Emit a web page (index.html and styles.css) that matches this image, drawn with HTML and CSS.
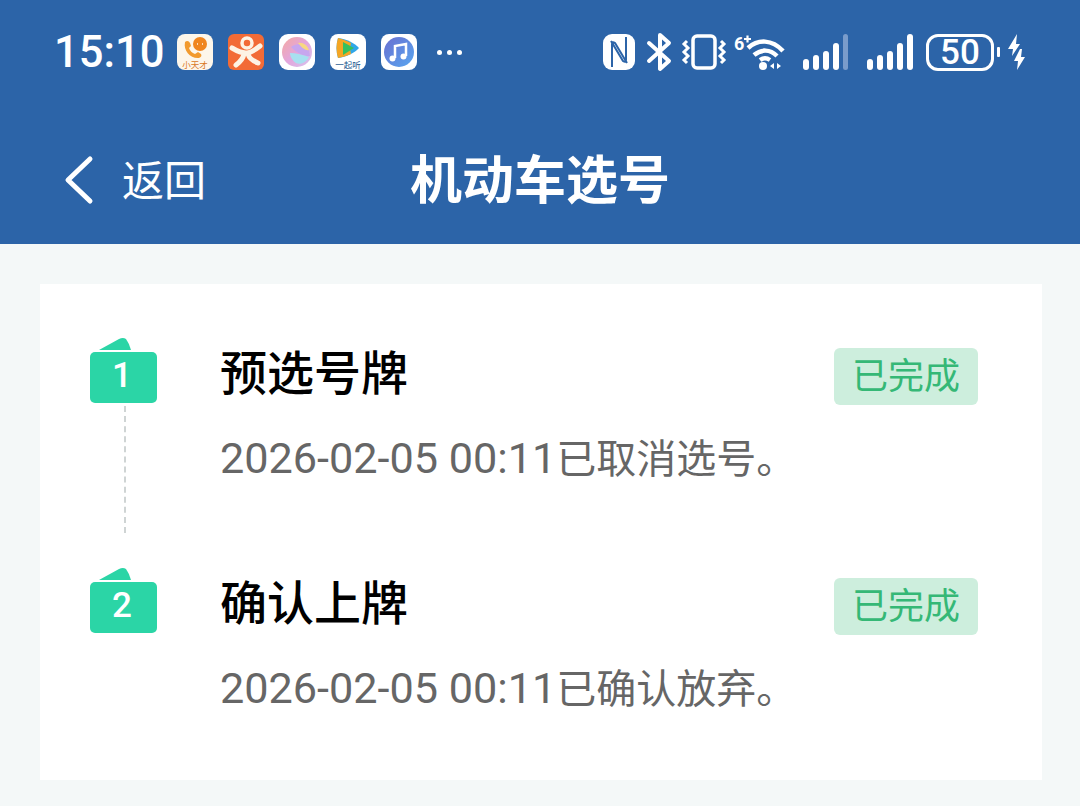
FILE: index.html
```html
<!DOCTYPE html>
<html lang="zh-CN">

<head>
    <meta charset="UTF-8">
    <title>机动车选号</title>
    <link rel="stylesheet" href="styles.css">
</head>

<body>
    <div class="header">
        <div class="status">
            <div class="status-left">
                <span class="time">15:10</span>
                <div class="apps">
                    <svg class="app" viewBox="0 0 36 36">
                        <rect width="36" height="36" rx="8" fill="#fdf6ea" />
                        <path d="M8 8c2-2 4-1 5 1l1 3-2 2c1 3 3 5 6 6l3-2 3 2c1 2 0 3-2 4-8 1-16-7-14-16z" fill="#f29a2e" />
                        <circle cx="23" cy="10" r="7" fill="#f0851e" />
                        <path d="M20 10h1M25 10h1" stroke="#fdf6ea" stroke-width="1.500" />
                        <text class="app-text" x="18" y="34" fill="#d9781f">小天才</text>
                    </svg>
                    <svg class="app" viewBox="0 0 36 36">
                        <rect width="36" height="36" rx="6" fill="#f26b36" />
                        <circle cx="19" cy="9" r="5" fill="none" stroke="#fdf3e4" stroke-width="3.500" />
                        <path d="M4 14c5 3 9 5 14 5s9-3 14-7M16 20c-1 5-4 8-8 11M20 20c1 4 5 7 10 9" fill="none" stroke="#fdf3e4" stroke-width="5" stroke-linecap="round" />
                    </svg>
                    <svg class="app" viewBox="0 0 36 36">
                        <defs>
                            <linearGradient id="orb" x1="0" y1="0" x2="1" y2="1">
                                <stop offset="0" stop-color="#f5a9a0" />
                                <stop offset="0.5" stop-color="#e3a6dc" />
                                <stop offset="1" stop-color="#d6c4ee" />
                            </linearGradient>
                        </defs>
                        <rect width="36" height="36" rx="9" fill="#fff" />
                        <circle cx="18" cy="18" r="15" fill="url(#orb)" />
                        <path d="M12 13c6-5 15-3 18 3l1 6c-6 1-13-3-19-9z" fill="#c7a6ee" />
                        <path d="M19 9c5-1 9 2 11 7-3 1-7-2-11-7z" fill="#f8d880" />
                        <path d="M11 19c6 0 13 2 19 4-3 6-9 8-13 6-3-2-6-6-6-10z" fill="#a8e0f0" />
                    </svg>
                    <svg class="app" viewBox="0 0 36 36">
                        <rect width="36" height="36" rx="8" fill="#fff" />
                        <path d="M8 4c8 1 17 5 21 10-4 5-13 9-21 10-2-7-2-13 0-20z" fill="#2fa6e8" />
                        <path d="M8 4c5 1 9 3 13 5-1 4-1 8 0 11-4 2-9 3-13 4-2-7-2-13 0-20z" fill="#f5a623" />
                        <path d="M13 8l11 6-11 7z" fill="#35c05f" />
                        <text class="app-text" x="18" y="34" fill="#20558c">一起听</text>
                    </svg>
                    <svg class="app" viewBox="0 0 36 36">
                        <defs>
                            <linearGradient id="note" x1="0" y1="0" x2="1" y2="1">
                                <stop offset="0" stop-color="#6a6fd0" />
                                <stop offset="1" stop-color="#58a6f0" />
                            </linearGradient>
                        </defs>
                        <rect width="36" height="36" rx="8" fill="#fff" />
                        <circle cx="18" cy="18" r="15" fill="url(#note)" />
                        <path d="M14 24V12l11-2v12" fill="none" stroke="#fff" stroke-width="2.500" />
                        <circle cx="11.500" cy="24.500" r="3" fill="#fff" />
                        <circle cx="22.500" cy="22.500" r="3" fill="#fff" />
                    </svg>
                </div>
                <div class="more"><i></i><i></i><i></i></div>
            </div>
            <div class="status-right">
                <svg class="nfc" viewBox="0 0 32 36">
                    <rect x="0" y="0" width="32" height="36" rx="9" fill="#fff" />
                    <path d="M9 33V10q0-3 3-1l12 20M23 3v23q0 3-3 1L8 7" fill="none" stroke="#2c64a8" stroke-width="2" />
                </svg>
                <svg class="bt" viewBox="0 0 24 36">
                    <path d="M2 9l20 18-9 8V1l9 8L2 27" fill="none" stroke="#fff" stroke-width="4" stroke-linejoin="round" stroke-linecap="round" />
                </svg>
                <svg class="vibrate" viewBox="0 0 44 36">
                    <rect x="11" y="2" width="22" height="32" rx="4" fill="none" stroke="#fff" stroke-width="3.500" />
                    <path d="M5 7l-3 3 4 4-4 4 4 4-4 4 3 3M39 7l3 3-4 4 4 4-4 4 4 4-3 3" fill="none" stroke="#fff" stroke-width="3" />
                </svg>
                <svg class="wifi" viewBox="0 0 52 36">
                    <text class="wifi-six" x="0" y="16" fill="#fff">6</text>
                    <path d="M10 5h7M13.500 1.500v7" stroke="#fff" stroke-width="2.200" />
                    <path d="M14 14c10-9 24-9 35 3M20 21c7-6 16-6 23 1M26 26c3-2 7-2 10 0" fill="none" stroke="#fff" stroke-width="4.500" />
                    <circle cx="29" cy="32" r="4" fill="#fff" />
                    <path d="M36 32l4-3v6zM43 29l4 3-4 3z" fill="#fff" />
                </svg>
                <svg class="signal" viewBox="0 0 46 36">
                    <rect x="0" y="25" width="6" height="11" rx="3" fill="#fff" />
                    <rect x="10" y="21" width="6" height="15" rx="3" fill="#fff" />
                    <rect x="20" y="17" width="6" height="19" rx="3" fill="#fff" />
                    <rect x="30" y="9" width="6" height="27" rx="3" fill="#fff" />
                    <rect x="40" y="0" width="5" height="36" rx="2.500" fill="#7a9ccb" />
                </svg>
                <svg class="signal signal-full" viewBox="0 0 46 36">
                    <rect x="0" y="25" width="6" height="11" rx="3" fill="#fff" />
                    <rect x="10" y="21" width="6" height="15" rx="3" fill="#fff" />
                    <rect x="20" y="17" width="6" height="19" rx="3" fill="#fff" />
                    <rect x="30" y="9" width="6" height="27" rx="3" fill="#fff" />
                    <rect x="40" y="0" width="6" height="36" rx="3" fill="#fff" />
                </svg>
                <div class="battery">50</div>
                <div class="battery-nub"></div>
                <svg class="bolt" viewBox="0 0 18 36">
                    <path d="M10 0L1 15h5l-1 7 8-12H9zM13 15L7 27h4l-1 9 8-13h-4l1-8z" fill="#fff" />
                </svg>
            </div>
        </div>
        <div class="nav">
            <div class="back">
                <svg class="chevron" viewBox="0 0 30 50">
                    <path d="M26 4L4 25l22 21" fill="none" stroke="#fff" stroke-width="5" stroke-linecap="round" stroke-linejoin="round" />
                </svg>
                <span class="back-text">返回</span>
            </div>
            <div class="nav-title">机动车选号</div>
            <div></div>
        </div>
    </div>

    <div class="card">
        <div class="step">
            <div class="step-side">
                <svg class="step-tab" viewBox="0 0 32 14">
                    <path d="M0 13L20 2q4-2 7 0 3 4 5 11z" fill="#2bd5a6" />
                </svg>
                <div class="step-num">1</div>
                <div class="step-line"></div>
            </div>
            <div class="step-body">
                <div class="step-head">
                    <span class="step-title">预选号牌</span>
                    <span class="tag">已完成</span>
                </div>
                <div class="step-desc"><span class="desc-time">2026-02-05 00:11</span>已取消选号。</div>
            </div>
        </div>
        <div class="step">
            <div class="step-side">
                <svg class="step-tab" viewBox="0 0 32 14">
                    <path d="M0 13L20 2q4-2 7 0 3 4 5 11z" fill="#2bd5a6" />
                </svg>
                <div class="step-num">2</div>
            </div>
            <div class="step-body">
                <div class="step-head">
                    <span class="step-title">确认上牌</span>
                    <span class="tag">已完成</span>
                </div>
                <div class="step-desc"><span class="desc-time">2026-02-05 00:11</span>已确认放弃。</div>
            </div>
        </div>
    </div>
</body>

</html>
```

FILE: styles.css
```css
body {
    margin: 0;
    height: 806px;
    overflow: hidden;
    background-color: #f4f8f8;
    font-family: Roboto, "Noto Sans CJK SC", sans-serif;
}

.header {
    height: 244px;
    background-color: #2c64a8;
    color: #fff;
}

.status {
    height: 104px;
    padding: 0 55px;
    display: flex;
    justify-content: space-between;
    align-items: center;
}

.status-left,
.status-right,
.apps,
.more {
    display: flex;
    align-items: center;
}

.time {
    font-size: 43.500px;
    width: 122px;
    font-weight: 500;
    margin-left: -1px;
    margin-right: 1px;
}

.apps {
    gap: 15px;
}

.app {
    width: 36px;
    height: 36px;
    display: block;
}

.app-text {
    font-size: 8.500px;
    text-anchor: middle;
    font-family: "Noto Sans CJK SC", sans-serif;
}

.more {
    margin-left: 20px;
    gap: 5px;
}

.more i {
    width: 5px;
    height: 5px;
    border-radius: 50%;
    background-color: #fff;
}

.status-right svg {
    display: block;
    height: 36px;
    overflow: visible;
}

.nfc {
    width: 32px;
}

.bt {
    width: 24px;
    margin-left: 12px;
}

.vibrate {
    width: 44px;
    margin-left: 11px;
}

.wifi {
    width: 52px;
    margin-left: 8px;
}

.wifi-six {
    font-size: 18px;
    font-weight: 700;
}

.signal {
    width: 46px;
    margin-left: 17px;
}

.signal-full {
    margin-left: 18px;
}

.battery {
    width: 68px;
    height: 37px;
    box-sizing: border-box;
    margin-left: 13px;
    border: 3px solid #fff;
    border-radius: 12px;
    display: flex;
    justify-content: center;
    align-items: center;
    font-size: 35px;
    font-weight: 500;
}

.battery-nub {
    width: 3px;
    height: 10px;
    margin-left: 3px;
    background-color: #fff;
    border-radius: 1px;
}

.bolt {
    width: 18px;
    margin-left: 7px;
}

.nav {
    height: 140px;
    padding-top: 6px;
    box-sizing: border-box;
    display: grid;
    grid-template-columns: 1fr auto 1fr;
    align-items: center;
}

.back {
    display: flex;
    align-items: center;
    padding-left: 64px;
}

.chevron {
    width: 30px;
    height: 50px;
    margin-top: 6px;
}

.back-text {
    margin-left: 28px;
    font-size: 42px;
    font-family: "Noto Sans CJK SC", sans-serif;
}

.nav-title {
    margin-bottom: 2px;
    font-size: 52px;
    font-weight: 700;
    font-family: "Noto Sans CJK SC", sans-serif;
}

.card {
    margin: 40px 38px 0 40px;
    height: 496px;
    padding-top: 53px;
    box-sizing: border-box;
    background-color: #fff;
}

.step {
    height: 230px;
    display: flex;
}

.step-side {
    width: 67px;
    margin-left: 50px;
    display: flex;
    flex-direction: column;
    align-items: center;
}

.step-tab {
    width: 32px;
    height: 14px;
    margin: 0 17px 1px 0;
    display: block;
}

.step-num {
    width: 67px;
    height: 51px;
    box-sizing: border-box;
    padding: 0 3px 5px 0;
    border-radius: 5px;
    background-color: #2bd5a6;
    color: #fff;
    font-size: 35px;
    font-weight: 500;
    display: flex;
    justify-content: center;
    align-items: center;
}

.step-line {
    height: 127px;
    margin: 3px 0 0 2px;
    border-left: 2px dashed #cfd4d4;
}

.step-body {
    flex: 1;
    margin-left: 63px;
    padding-right: 64px;
}

.step-head {
    display: flex;
    justify-content: space-between;
    align-items: center;
    height: 58px;
    margin-top: 10px;
}

.step-title {
    margin-bottom: 14px;
    font-size: 47px;
    font-weight: 500;
    color: #000;
    font-family: "Noto Sans CJK SC", sans-serif;
}

.tag {
    width: 144px;
    height: 57px;
    box-sizing: border-box;
    padding-bottom: 6px;
    border-radius: 6px;
    background-color: #cdeedd;
    color: #35b876;
    font-size: 36px;
    display: flex;
    justify-content: center;
    align-items: center;
    font-family: "Noto Sans CJK SC", sans-serif;
}

.step-desc {
    margin-top: 29px;
    font-size: 40px;
    line-height: 50px;
    color: #666;
}

.desc-time {
    font-size: 43.200px;
}
```
